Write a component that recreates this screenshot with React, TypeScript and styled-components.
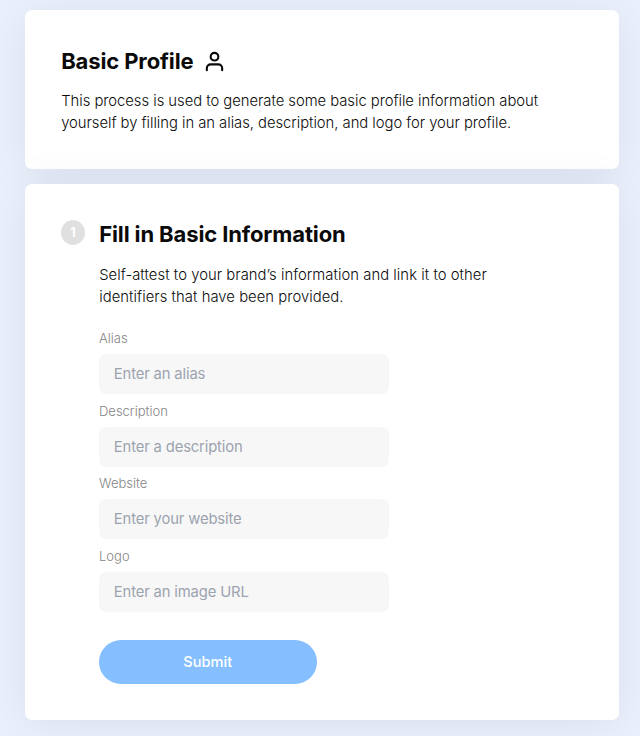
import React from "react";
import styled, { createGlobalStyle } from "styled-components";

const GlobalStyle = createGlobalStyle`
  * { box-sizing: border-box; }
  body { margin: 0; background: #ebf0fd; font-family: Inter, sans-serif; color: #0a0a0a; }
`;

const Page = styled.main`
  display: flex;
  flex-direction: column;
  gap: 14.5px;
  height: 736px;
  padding: 10px 20.6px 16px 25px;
  overflow: hidden;
`;

const Card = styled.section<{ $height: number }>`
  display: flex;
  flex: none;
  height: ${(p) => p.$height}px;
  padding: 36px;
  gap: 14px;
  background: #fff;
  border-radius: 7px;
  box-shadow: 0 4px 46px rgba(20, 20, 40, 0.075);
`;

const Content = styled.div`
  display: flex;
  flex-direction: column;
`;

const Title = styled.h1`
  display: flex;
  align-items: center;
  gap: 9.6px;
  height: 30px;
  margin: 0 0 0 0.2px;
  font-size: 22px;
  font-weight: 650;
  letter-spacing: -0.12px;
  line-height: 31px;
  white-space: nowrap;
`;

const Text = styled.p<{ $spacing: number }>`
  margin: 14px 0 0 0.2px;
  font-size: 14.8px;
  font-weight: 300;
  line-height: 22px;
  letter-spacing: ${(p) => p.$spacing}px;
  white-space: nowrap;
`;

const Step = styled.span`
  display: flex;
  flex: none;
  align-items: center;
  justify-content: center;
  width: 24px;
  height: 25px;
  border-radius: 50%;
  background: #e0e0e0;
  color: #fff;
  font-size: 12.7px;
  font-weight: 700;
`;

const Form = styled.form`
  display: flex;
  flex-direction: column;
  margin-top: 20.6px;
`;

const Field = styled.label`
  display: flex;
  flex-direction: column;
  height: 72.5px;
  color: #858585;
  font-size: 13px;
  font-weight: 300;
  line-height: 20px;
`;

const Input = styled.input`
  width: 290px;
  height: 40px;
  margin-top: 6px;
  padding: 0 14.8px;
  border: 0;
  border-radius: 7px;
  background: #f7f7f7;
  font: 400 14.8px Inter, sans-serif;
  letter-spacing: -0.15px;
  &::placeholder { color: #9ca3af; opacity: 1; }
`;

const Submit = styled.button`
  width: 217.5px;
  height: 44px;
  margin-top: 22.2px;
  border: 0;
  border-radius: 22px;
  background: #85bfff;
  color: #fff;
  font: 450 14.6px Inter, sans-serif;
`;

const fields = [
  ["Alias", "Enter an alias"],
  ["Description", "Enter a description"],
  ["Website", "Enter your website"],
  ["Logo", "Enter an image URL"],
];

export default function App() {
  return (
    <>
      <GlobalStyle />
      <Page>
        <Card $height={159}>
          <Content>
            <Title>
              Basic Profile
              <svg width="23" height="23" viewBox="0 0 24 24" fill="none" stroke="currentColor" strokeWidth="2.2" strokeLinecap="round" strokeLinejoin="round">
                <path d="M20 21v-2a4 4 0 0 0-4-4H8a4 4 0 0 0-4 4v2" />
                <circle cx="12" cy="7" r="4" />
              </svg>
            </Title>
            <Text $spacing={-0.03}>
              This process is used to generate some basic profile information about
              <br />
              yourself by filling in an alias, description, and logo for your profile.
            </Text>
          </Content>
        </Card>
        <Card $height={536.5}>
          <Step>1</Step>
          <Content>
            <Title>Fill in Basic Information</Title>
            <Text $spacing={0.05}>
              Self-attest to your brand’s information and link it to other
              <br />
              identifiers that have been provided.
            </Text>
            <Form onSubmit={(e) => e.preventDefault()}>
              {fields.map(([label, placeholder]) => (
                <Field key={label}>
                  {label}
                  <Input placeholder={placeholder} />
                </Field>
              ))}
              <Submit>Submit</Submit>
            </Form>
          </Content>
        </Card>
      </Page>
    </>
  );
}
